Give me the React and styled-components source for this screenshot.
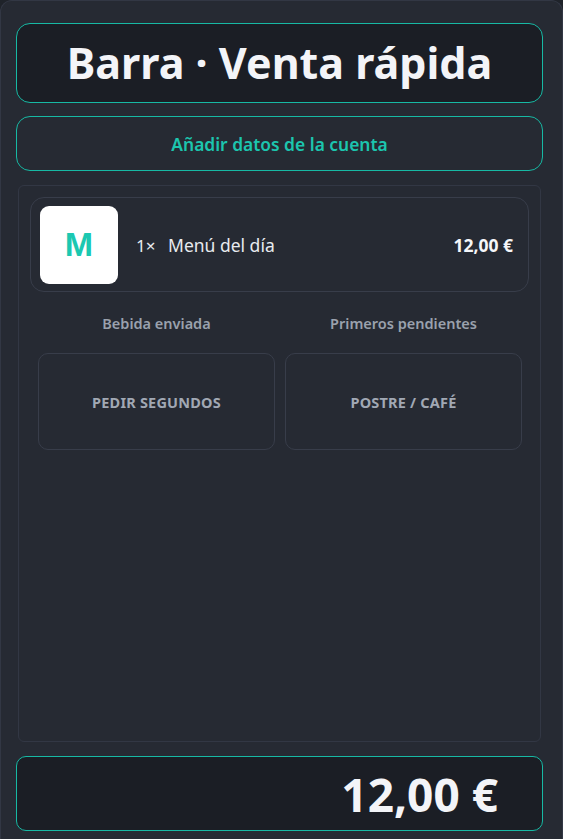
import styled, { createGlobalStyle } from 'styled-components';

const GlobalStyle = createGlobalStyle`
  *, *::before, *::after { box-sizing: border-box; margin: 0; padding: 0; }
  html, body { height: 100%; }
  body {
    background: #1f232a;
    font-family: 'Noto Sans', 'Open Sans', sans-serif;
    -webkit-font-smoothing: antialiased;
  }
  #root { height: 100%; }
`;

const Card = styled.div`
  height: 100vh;
  background: #262a33;
  border: 1px solid #323744;
  border-bottom: none;
  border-radius: 12px 12px 0 0;
  padding: 22px 19px 8px 15px;
  display: flex;
  flex-direction: column;
  gap: 13px;
`;

const TitleBox = styled.div`
  height: 80px;
  flex-shrink: 0;
  background: #1b1e25;
  border: 1px solid #17b9a4;
  border-radius: 14px;
  display: flex;
  align-items: center;
  justify-content: center;
`;

const Title = styled.h1`
  color: #f3f4f8;
  font-size: 43px;
  font-weight: 700;
  line-height: 1;
  padding-bottom: 2px;
`;

const AccountButton = styled.button`
  height: 55px;
  flex-shrink: 0;
  background: transparent;
  border: 1px solid #17b9a4;
  border-radius: 14px;
  color: #1cc5ae;
  font-family: inherit;
  font-size: 17.4px;
  font-weight: 600;
  cursor: pointer;
`;

const Panel = styled.div`
  flex: 1;
  margin: 1px 2px;
  border: 1px solid #323744;
  border-radius: 6px;
  padding: 11px;
  display: flex;
  flex-direction: column;
`;

const ItemRow = styled.div`
  display: flex;
  align-items: center;
  gap: 18px;
  height: 95px;
  padding: 0 15px 0 9px;
  border: 1px solid #383d4a;
  border-radius: 14px;
`;

const Badge = styled.div`
  width: 78px;
  height: 78px;
  flex-shrink: 0;
  background: #ffffff;
  border-radius: 9px;
  display: flex;
  align-items: center;
  justify-content: center;
  color: #1cc8b1;
  font-family: 'Liberation Sans', Arial, sans-serif;
  font-weight: 700;
  font-size: 34px;
`;

const ItemName = styled.span`
  flex: 1;
  color: #e8eaef;
  font-size: 17.5px;

  small {
    font-size: 17px;
    margin-right: 8px;
  }
`;

const ItemPrice = styled.span`
  color: #f5f6f9;
  font-size: 17.5px;
  font-weight: 700;
`;

const Grid = styled.div`
  display: grid;
  grid-template-columns: 1fr 1fr;
  column-gap: 10px;
  padding: 0 7px 0 8px;
`;

const StatusLabel = styled.div`
  height: 61px;
  display: flex;
  align-items: center;
  justify-content: center;
  color: #9aa1ad;
  font-size: 14.5px;
  font-weight: 600;
`;

const ActionButton = styled.button`
  height: 97px;
  background: transparent;
  border: 1px solid #383d4a;
  border-radius: 10px;
  color: #a1a8b4;
  font-family: inherit;
  font-size: 14.5px;
  font-weight: 700;
  letter-spacing: 0.2px;
  text-transform: uppercase;
  cursor: pointer;
`;

const TotalBox = styled.div`
  height: 75px;
  flex-shrink: 0;
  background: #1b1e25;
  border: 1px solid #17b9a4;
  border-radius: 10px;
  display: flex;
  align-items: center;
  justify-content: flex-end;
  padding-right: 44px;
  color: #f3f4f8;
  font-size: 46px;
  font-weight: 700;
`;

export default function App() {
  return (
    <>
      <GlobalStyle />
      <Card>
        <TitleBox>
          <Title>Barra · Venta rápida</Title>
        </TitleBox>
        <AccountButton>Añadir datos de la cuenta</AccountButton>
        <Panel>
          <ItemRow>
            <Badge>M</Badge>
            <ItemName><small>1×</small> Menú del día</ItemName>
            <ItemPrice>12,00 €</ItemPrice>
          </ItemRow>
          <Grid>
            <StatusLabel>Bebida enviada</StatusLabel>
            <StatusLabel>Primeros pendientes</StatusLabel>
            <ActionButton>Pedir segundos</ActionButton>
            <ActionButton>Postre / café</ActionButton>
          </Grid>
        </Panel>
        <TotalBox>12,00 €</TotalBox>
      </Card>
    </>
  );
}
